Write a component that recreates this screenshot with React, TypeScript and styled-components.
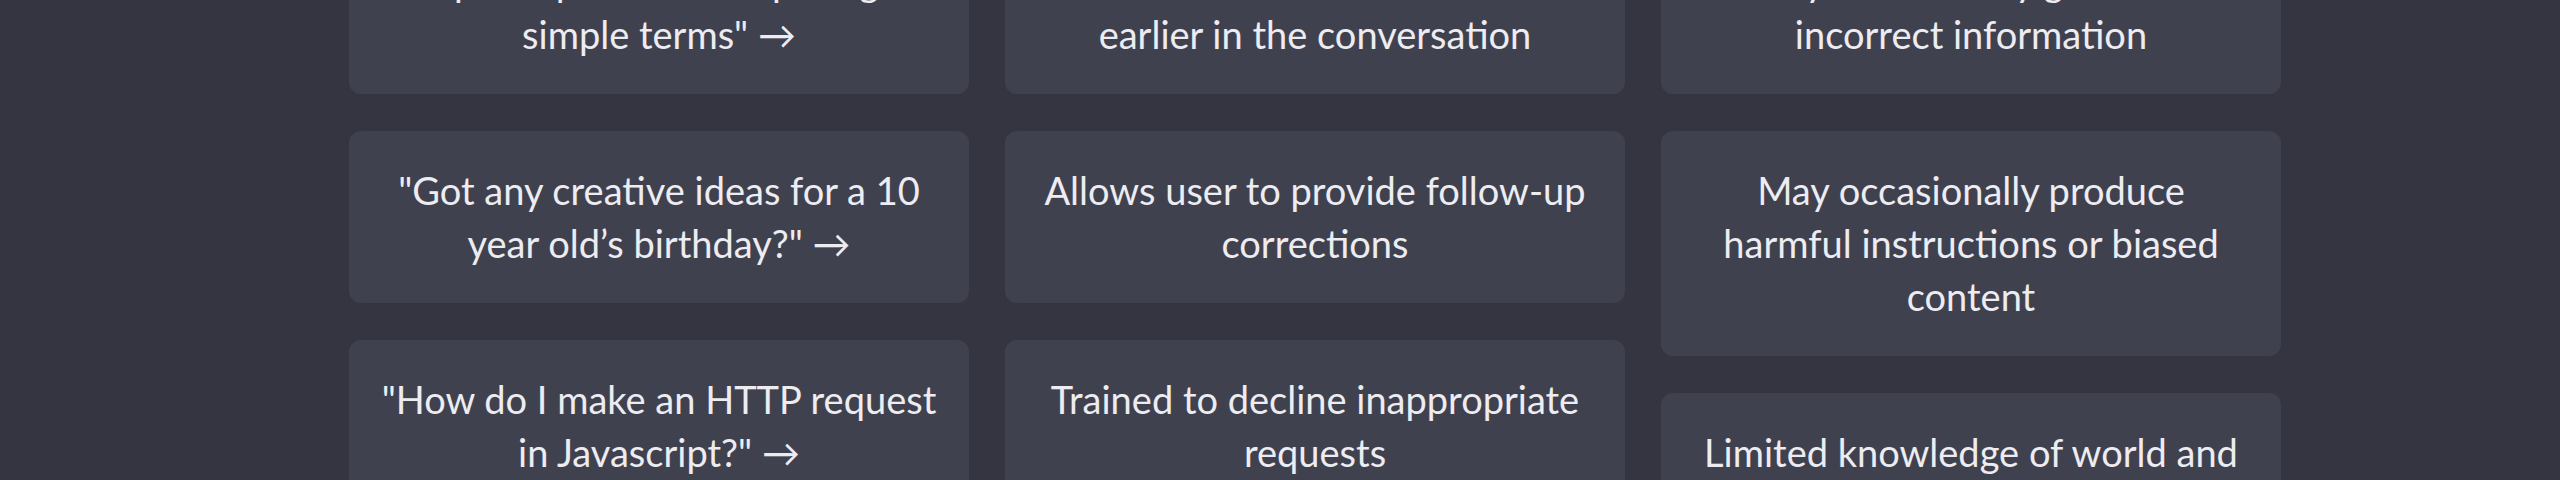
import styled, { createGlobalStyle } from 'styled-components';

const columns = [
    [
        '"Explain quantum computing in simple terms" →',
        '"Got any creative ideas for a 10 year old’s birthday?" →',
        '"How do I make an HTTP request in Javascript?" →',
    ],
    [
        'Remembers what user said earlier in the conversation',
        'Allows user to provide follow-up corrections',
        'Trained to decline inappropriate requests',
    ],
    [
        'May occasionally generate incorrect information',
        'May occasionally produce harmful instructions or biased content',
        'Limited knowledge of world and events after 2021',
    ],
];

export default function App() {
    return (
        <>
            <GlobalStyle />
            <Page>
                <Columns>
                    {columns.map((items, i) => (
                        <Column key={i}>
                            {items.map((text) => (
                                <Card key={text}>{text}</Card>
                            ))}
                        </Column>
                    ))}
                </Columns>
            </Page>
        </>
    );
}

const GlobalStyle = createGlobalStyle`
    html, body {
        margin: 0;
        padding: 0;
        background: #343541;
        overflow: hidden;
    }
`;

const Page = styled.main`
    min-height: 480px;
    background: #343541;
    color: #ececf1;
    font-family: Lato, 'Noto Sans', sans-serif;
`;

const Columns = styled.div`
    display: flex;
    align-items: flex-start;
    gap: 36px;
    padding-left: 349px;
    margin-top: -78px;
`;

const Column = styled.div`
    width: 620px;
    display: flex;
    flex-direction: column;
    gap: 37px;
`;

const Card = styled.button`
    display: block;
    width: 100%;
    padding: 33px 31px;
    border: none;
    border-radius: 12px;
    background: #40414f;
    color: #ececf1;
    font-family: inherit;
    font-size: 38px;
    line-height: 53px;
    text-align: center;
    cursor: pointer;
`;
